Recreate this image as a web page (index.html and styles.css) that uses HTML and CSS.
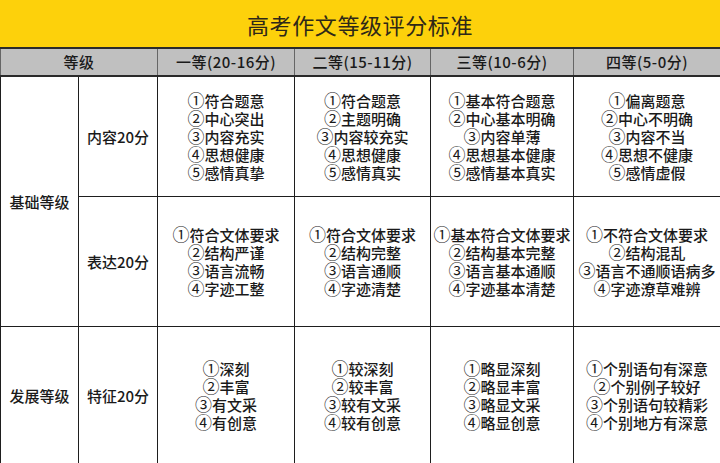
FILE: index.html
```html
<!DOCTYPE html>
<html lang="zh">
<head>
<meta charset="utf-8">
<link rel="stylesheet" href="styles.css">
</head>
<body>
<div class="page">
  <div class="title">高考作文等级评分标准</div>
  <table class="grid">
    <colgroup>
      <col class="c1"><col class="c2"><col class="c3"><col class="c4"><col class="c5"><col class="c6">
    </colgroup>
    <tr class="head">
      <th colspan="2">等级</th>
      <th>一等(20-16分)</th>
      <th>二等(15-11分)</th>
      <th>三等(10-6分)</th>
      <th>四等(5-0分)</th>
    </tr>
    <tr class="r1">
      <td rowspan="2">基础等级</td>
      <td>内容20分</td>
      <td><span class="n">①</span>符合题意<br><span class="n">②</span>中心突出<br><span class="n">③</span>内容充实<br><span class="n">④</span>思想健康<br><span class="n">⑤</span>感情真挚</td>
      <td><span class="n">①</span>符合题意<br><span class="n">②</span>主题明确<br><span class="n">③</span>内容较充实<br><span class="n">④</span>思想健康<br><span class="n">⑤</span>感情真实</td>
      <td><span class="n">①</span>基本符合题意<br><span class="n">②</span>中心基本明确<br><span class="n">③</span>内容单薄<br><span class="n">④</span>思想基本健康<br><span class="n">⑤</span>感情基本真实</td>
      <td><span class="n">①</span>偏离题意<br><span class="n">②</span>中心不明确<br><span class="n">③</span>内容不当<br><span class="n">④</span>思想不健康<br><span class="n">⑤</span>感情虚假</td>
    </tr>
    <tr class="r2">
      <td>表达20分</td>
      <td><span class="n">①</span>符合文体要求<br><span class="n">②</span>结构严谨<br><span class="n">③</span>语言流畅<br><span class="n">④</span>字迹工整</td>
      <td><span class="n">①</span>符合文体要求<br><span class="n">②</span>结构完整<br><span class="n">③</span>语言通顺<br><span class="n">④</span>字迹清楚</td>
      <td><span class="n">①</span>基本符合文体要求<br><span class="n">②</span>结构基本完整<br><span class="n">③</span>语言基本通顺<br><span class="n">④</span>字迹基本清楚</td>
      <td><span class="n">①</span>不符合文体要求<br><span class="n">②</span>结构混乱<br><span class="n">③</span>语言不通顺语病多<br><span class="n">④</span>字迹潦草难辨</td>
    </tr>
    <tr class="r3">
      <td>发展等级</td>
      <td>特征20分</td>
      <td><span class="n">①</span>深刻<br><span class="n">②</span>丰富<br><span class="n">③</span>有文采<br><span class="n">④</span>有创意</td>
      <td><span class="n">①</span>较深刻<br><span class="n">②</span>较丰富<br><span class="n">③</span>较有文采<br><span class="n">④</span>较有创意</td>
      <td><span class="n">①</span>略显深刻<br><span class="n">②</span>略显丰富<br><span class="n">③</span>略显文采<br><span class="n">④</span>略显创意</td>
      <td><span class="n">①</span>个别语句有深意<br><span class="n">②</span>个别例子较好<br><span class="n">③</span>个别语句较精彩<br><span class="n">④</span>个别地方有深意</td>
    </tr>
  </table>
</div>
</body>
</html>
```

FILE: styles.css
```css
html, body {
  margin: 0;
  padding: 0;
  background: #ffffff;
}
.page {
  width: 720px;
  height: 463px;
  overflow: hidden;
  font-family: "Noto Sans CJK SC", "Noto Sans", sans-serif;
  color: #1a1a1a;
}
.title {
  height: 47px;
  background: #fdd10b;
  display: flex;
  align-items: center;
  justify-content: center;
  font-size: 22px;
  color: #2e2818;
  letter-spacing: 0.6px;
}
.grid {
  width: 720px;
  border-collapse: collapse;
  table-layout: fixed;
}
.c1 { width: 78px; }
.c2 { width: 79px; }
.c3 { width: 137px; }
.c4 { width: 136px; }
.c5 { width: 143px; }
.c6 { width: 147px; }
.grid th, .grid td {
  border: 1px solid #1e1e1e;
  padding: 0;
  text-align: center;
  vertical-align: middle;
  font-size: 15px;
  line-height: 18px;
  font-weight: 500;
  white-space: nowrap;
}
.n {
  font-size: 17px;
  line-height: 0;
  font-weight: 400;
}
.head th {
  background: #c0c0c0;
  height: 26px;
  letter-spacing: 0.5px;
  border-left-color: #666;
  border-right-color: #666;
  border-top: 2px solid #2a2a2a;
  border-bottom: 2px solid #2a2a2a;
}
.r1 td { height: 119px; }
.r2 td { height: 129px; }
.r3 td { height: 137px; }
```
